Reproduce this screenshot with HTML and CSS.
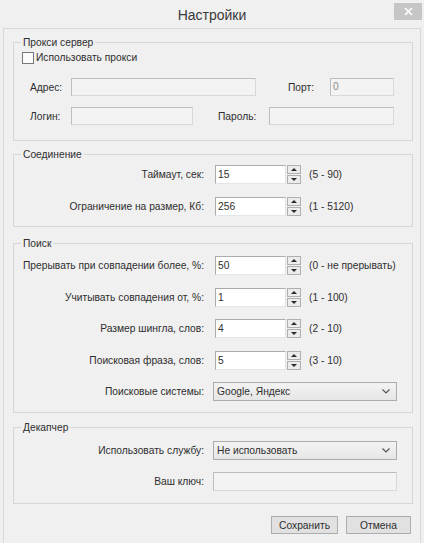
FILE: index.html
```html
<!DOCTYPE html>
<html lang="ru">
<head>
<meta charset="utf-8">
<title>Настройки</title>
<link rel="stylesheet" href="styles.css">
</head>
<body>
<div class="window">
  <div class="titlebar">
    <span class="tb-spacer"></span>
    <div class="title">Настройки</div>
    <div class="close"><svg width="9" height="9" viewBox="0 0 9 9"><path d="M1 1L8 8M8 1L1 8" stroke="#fff" stroke-width="1.6" fill="none"/></svg></div>
  </div>
  <div class="client">
    <fieldset class="group g-proxy">
      <legend>Прокси сервер</legend>
      <div class="check"><span class="box"></span><span>Использовать прокси</span></div>
      <div class="prow r1">
        <span class="plabel w-addr">Адрес:</span>
        <div class="field dis f-addr"></div>
        <span class="plabel w-port">Порт:</span>
        <div class="field dis f-port">0</div>
      </div>
      <div class="prow r2">
        <span class="plabel w-addr">Логин:</span>
        <div class="field dis f-login"></div>
        <span class="plabel w-pass">Пароль:</span>
        <div class="field dis f-pass"></div>
      </div>
    </fieldset>

    <fieldset class="group g-conn">
      <legend>Соединение</legend>
      <div class="rows rows-conn">
        <span class="lbl">Таймаут, сек:</span>
        <div class="ctl"><div class="field num">15</div><div class="spin"><span class="up"><i></i></span><span class="down"><i></i></span></div><span class="range">(5 - 90)</span></div>
        <span class="lbl">Ограничение на размер, Кб:</span>
        <div class="ctl"><div class="field num">256</div><div class="spin"><span class="up"><i></i></span><span class="down"><i></i></span></div><span class="range">(1 - 5120)</span></div>
      </div>
    </fieldset>

    <fieldset class="group g-search">
      <legend>Поиск</legend>
      <div class="rows rows-search">
        <span class="lbl">Прерывать при совпадении более, %:</span>
        <div class="ctl"><div class="field num">50</div><div class="spin"><span class="up"><i></i></span><span class="down"><i></i></span></div><span class="range">(0 - не прерывать)</span></div>
        <span class="lbl">Учитывать совпадения от, %:</span>
        <div class="ctl"><div class="field num">1</div><div class="spin"><span class="up"><i></i></span><span class="down"><i></i></span></div><span class="range">(1 - 100)</span></div>
        <span class="lbl">Размер шингла, слов:</span>
        <div class="ctl"><div class="field num">4</div><div class="spin"><span class="up"><i></i></span><span class="down"><i></i></span></div><span class="range">(2 - 10)</span></div>
        <span class="lbl">Поисковая фраза, слов:</span>
        <div class="ctl"><div class="field num">5</div><div class="spin"><span class="up"><i></i></span><span class="down"><i></i></span></div><span class="range">(3 - 10)</span></div>
        <span class="lbl">Поисковые системы:</span>
        <div class="select"><span>Google, Яндекс</span><svg width="8" height="5" viewBox="0 0 8 5"><path d="M0.5 0.5L4 4L7.5 0.5" stroke="#555" stroke-width="1.2" fill="none"/></svg></div>
      </div>
    </fieldset>

    <fieldset class="group g-captcha">
      <legend>Декапчер</legend>
      <div class="rows rows-captcha">
        <span class="lbl">Использовать службу:</span>
        <div class="select"><span>Не использовать</span><svg width="8" height="5" viewBox="0 0 8 5"><path d="M0.5 0.5L4 4L7.5 0.5" stroke="#555" stroke-width="1.2" fill="none"/></svg></div>
        <span class="lbl">Ваш ключ:</span>
        <div class="field dis f-key"></div>
      </div>
    </fieldset>

    <div class="footer">
      <div class="btn b-save">Сохранить</div>
      <div class="btn b-cancel">Отмена</div>
    </div>
  </div>
</div>
</body>
</html>
```

FILE: styles.css
```css
* { box-sizing: border-box; }
html, body { margin: 0; padding: 0; }
body {
  width: 424px;
  height: 543px;
  overflow: hidden;
  background: #f0f0f0;
  font-family: "Liberation Sans", Arial, sans-serif;
  font-size: 10.25px;
  color: #2e2e2e;
}
.window {
  height: 543px;
  display: flex;
  flex-direction: column;
  padding: 0 3px 0 3px;
}
.titlebar {
  height: 28px;
  flex: none;
  display: grid;
  grid-template-columns: 1fr auto 1fr;
}
.title {
  align-self: center;
  padding-top: 2px;
  font-size: 14px;
  color: #3a3a3a;
}
.close {
  justify-self: end;
  align-self: start;
  margin-top: 3px;
  margin-right: -1px;
  width: 28px;
  height: 17px;
  background: #c6c6c6;
  display: flex;
  align-items: center;
  justify-content: center;
}
.client {
  flex: 1;
  border: 1px solid #d9d9d9;
  border-bottom: 0;
  padding: 7px 7px 0 9px;
  display: flex;
  flex-direction: column;
}
.group {
  margin: 0;
  padding: 0;
  border: 1px solid #d6d6d6;
  min-width: 0;
}
.group legend {
  margin-left: 7px;
  padding: 0 2px;
  line-height: 13px;
  font-size: 10.25px;
}
.g-proxy { padding-bottom: 15px; }
.g-conn { margin-top: 7px; padding-bottom: 10px; }
.g-search { margin-top: 10px; padding-bottom: 11px; }
.g-captcha { margin-top: 8px; padding-bottom: 12px; }

.check {
  display: flex;
  align-items: center;
  gap: 2px;
  margin: 3px 0 0 8px;
  height: 12px;
  line-height: 12px;
}
.box {
  width: 12px;
  height: 12px;
  border: 1px solid #7a7a7a;
  background: #fcfcfc;
}
.prow {
  display: flex;
  align-items: center;
  padding-left: 16px;
  height: 18px;
}
.prow.r1 { margin-top: 14px; }
.prow.r2 { margin-top: 11px; }
.plabel { flex: none; white-space: nowrap; }
.w-addr { width: 41px; }
.w-port { width: 42px; margin-left: 32px; }
.w-pass { width: 51px; margin-left: 25px; }

.field {
  height: 18px;
  border: 1px solid;
  border-color: #a9abb0 #e2e6ea #e2e6ea #a9abb0;
  background: #fff;
  padding: 0 2px;
  line-height: 16px;
  flex: none;
}
.field.dis {
  background: #f3f3f3;
  border-color: #bdbdbd #d8d8d8 #d8d8d8 #bdbdbd;
  color: #8a8a8a;
}
.f-addr { width: 185px; }
.f-port { width: 64px; }
.f-login { width: 122px; }
.f-pass { width: 125px; }
.f-key { width: 184px; height: 19px; }

.rows {
  display: grid;
  grid-template-columns: 190px auto;
  column-gap: 9px;
  align-items: center;
  justify-content: start;
}
.rows-conn { margin-top: 4px; row-gap: 13px; }
.rows-search { margin-top: 6px; row-gap: 12.5px; }
.rows-captcha { margin-top: 7px; row-gap: 12px; }
.lbl {
  text-align: right;
  white-space: nowrap;
}
.ctl {
  display: flex;
  align-items: center;
  height: 19px;
}
.num {
  margin-left: 2px;
  width: 71px;
  height: 19px;
  line-height: 17px;
}
.spin {
  margin-left: 1px;
  display: flex;
  flex-direction: column;
  gap: 1px;
}
.spin span {
  width: 14px;
  height: 9px;
  border: 1px solid #b0b0b0;
  background: #ececec;
  display: flex;
  align-items: center;
  justify-content: center;
}
.spin .up i {
  width: 0; height: 0;
  border-left: 3px solid transparent;
  border-right: 3px solid transparent;
  border-bottom: 3px solid #2a2a2a;
}
.spin .down i {
  width: 0; height: 0;
  border-left: 3px solid transparent;
  border-right: 3px solid transparent;
  border-top: 3px solid #2a2a2a;
}
.range {
  margin-left: 8px;
  white-space: nowrap;
}
.select {
  width: 184px;
  height: 19px;
  border: 1px solid #acacac;
  background: linear-gradient(#f3f3f3, #e6e6e6);
  display: flex;
  align-items: center;
  justify-content: space-between;
  padding: 0 6px 0 3px;
}
.footer {
  margin-top: 12px;
  margin-right: 2px;
  display: flex;
  justify-content: flex-end;
  gap: 8px;
}
.btn {
  height: 18px;
  border: 1px solid #adadad;
  background: #e1e1e1;
  display: flex;
  align-items: center;
  justify-content: center;
}
.b-save { width: 67px; }
.b-cancel { width: 65px; }
```
